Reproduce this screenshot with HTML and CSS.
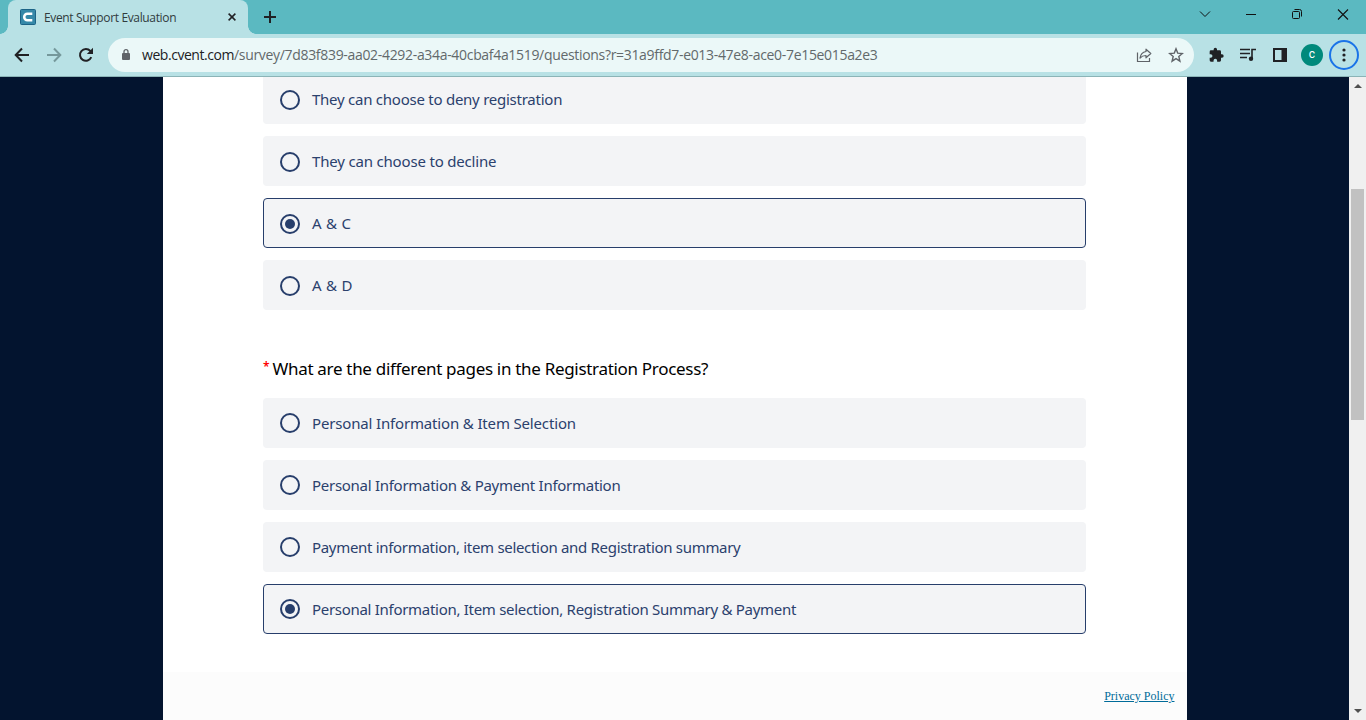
FILE: index.html
```html
<!DOCTYPE html>
<html lang="en">
<head>
<meta charset="utf-8">
<title>Event Support Evaluation</title>
<link rel="stylesheet" href="styles.css">
</head>
<body>
<div class="browser">
  <header class="tabstrip">
    <div class="tab">
      <svg class="favicon" width="16" height="16" viewBox="0 0 16 16"><rect x=".5" y=".5" width="15" height="15" rx="1" fill="#3588a8" stroke="#1c6386"/><path d="M12.300 4.800H7.400a3.200 3.200 0 0 0 0 6.400h4.900" fill="none" stroke="#fff" stroke-width="2.500"/></svg>
      <span class="tab-title">Event Support Evaluation</span>
      <svg class="tab-close" width="8" height="8" viewBox="0 0 8 8"><path d="M.6.6l6.800 6.800M7.400.6L.6 7.400" stroke="#202124" stroke-width="1.500"/></svg>
    </div>
    <svg class="new-tab" width="12" height="12" viewBox="0 0 12 12"><path d="M6 0v12M0 6h12" stroke="#202124" stroke-width="2"/></svg>
    <div class="window-controls">
      <svg width="46" height="30" viewBox="0 0 46 30"><path d="M18 11.500l5 5 5-5" fill="none" stroke="#111" stroke-width="1"/></svg>
      <svg width="46" height="30" viewBox="0 0 46 30"><path d="M18 14.500h10" stroke="#111"/></svg>
      <svg width="46" height="30" viewBox="0 0 46 30"><rect x="18.500" y="11.500" width="7" height="7" rx="1" fill="none" stroke="#111"/><path d="M20.500 9.500h5a2 2 0 0 1 2 2v5" fill="none" stroke="#111"/></svg>
      <svg width="46" height="30" viewBox="0 0 46 30"><path d="M18 9.500l10 10M28 9.500l-10 10" stroke="#111" stroke-width="1.100"/></svg>
    </div>
  </header>
  <nav class="toolbar">
    <div class="nav-buttons">
      <svg width="16" height="16" viewBox="0 0 16 16"><path d="M15 8H2M8 1.500L1.700 8 8 14.500" fill="none" stroke="#202124" stroke-width="2"/></svg>
      <svg width="16" height="16" viewBox="0 0 16 16"><path d="M1 8h13M8 1.500L14.300 8 8 14.500" fill="none" stroke="#75989b" stroke-width="2"/></svg>
      <svg width="16" height="16" viewBox="0 0 16 16"><path d="M13.300 10.200A5.900 5.900 0 1 1 12.300 3.900L14 5.600" fill="none" stroke="#202124" stroke-width="2"/><path d="M15 .8v6.200H8.800z" fill="#202124"/></svg>
    </div>
    <div class="address">
      <svg class="lock" width="8" height="12" viewBox="0 0 8 12"><path d="M1 4h6a1 1 0 0 1 1 1v5a1 1 0 0 1-1 1H1a1 1 0 0 1-1-1V5a1 1 0 0 1 1-1z" fill="#5f6368"/><path d="M2 4.500V2.700a2 2 0 0 1 4 0v1.800" fill="none" stroke="#5f6368" stroke-width="1.300"/></svg>
      <span class="url"><span class="host">web.cvent.com</span>/survey/7d83f839-aa02-4292-a34a-40cbaf4a1519/questions?r=31a9ffd7-e013-47e8-ace0-7e15e015a2e3</span>
      <svg class="share" width="16" height="16" viewBox="0 0 16 16"><path d="M1.500 5.500v9h12v-3.500" fill="none" stroke="#5f6368" stroke-width="1.200"/><path d="M10 2.200L14.800 6.500 10 10.800V8.500c-2.600 0-4.400.7-6 2.600.5-3.600 2.700-6.100 6-6.600z" fill="none" stroke="#5f6368" stroke-width="1.200" stroke-linejoin="round"/></svg>
      <svg class="star" width="16" height="16" viewBox="0 0 16 16"><path d="M8 1.800l1.700 4.300 4.700.4-3.600 3 1.100 4.600L8 11.600l-3.900 2.500 1.100-4.600-3.600-3 4.700-.4z" fill="none" stroke="#5f6368" stroke-width="1.400"/></svg>
    </div>
    <div class="actions">
      <svg width="16" height="16" viewBox="0 0 24 24"><path transform="translate(.5 0)" d="M20.500 11H19V7a2 2 0 0 0-2-2h-4V3.500a2.500 2.500 0 0 0-5 0V5H4a2 2 0 0 0-2 2v3.800h1.500a2.700 2.700 0 0 1 0 5.400H2V20a2 2 0 0 0 2 2h3.800v-1.500a2.700 2.700 0 0 1 5.400 0V22H17a2 2 0 0 0 2-2v-4h1.500a2.500 2.500 0 0 0 0-5z" fill="#202124"/></svg>
      <svg width="16" height="16" viewBox="0 0 16 16"><path d="M0 2.500h10M0 6.500h10M0 10.500h7M12 11V2.500h4" fill="none" stroke="#202124" stroke-width="1.600"/><circle cx="11" cy="11.800" r="2.200" fill="#202124"/></svg>
      <svg width="16" height="16" viewBox="0 0 16 16"><path d="M2 2h12v12H2z" fill="none" stroke="#202124" stroke-width="2"/><path d="M9.500 2H14v12H9.500z" fill="#202124"/></svg>
    </div>
    <span class="avatar">c</span>
    <span class="menu"><svg width="4" height="14" viewBox="0 0 4 14"><circle cx="2" cy="2" r="1.600"/><circle cx="2" cy="7" r="1.600"/><circle cx="2" cy="12" r="1.600"/></svg></span>
  </nav>
  <div class="viewport">
    <main class="page">
      <section class="questions">
        <div class="option upper first"><i class="radio"></i><span class="label l1">They can choose to deny registration</span></div>
        <div class="option upper"><i class="radio"></i><span class="label l2">They can choose to decline</span></div>
        <div class="option upper selected"><i class="radio"></i><span class="label l3">A &amp; C</span></div>
        <div class="option upper"><i class="radio"></i><span class="label l4">A &amp; D</span></div>
        <h2 class="question"><span class="required">*</span><span class="question-text">What are the different pages in the Registration Process?</span></h2>
        <div class="option"><i class="radio"></i><span class="label l5">Personal Information &amp; Item Selection</span></div>
        <div class="option"><i class="radio"></i><span class="label l6">Personal Information &amp; Payment Information</span></div>
        <div class="option"><i class="radio"></i><span class="label l7">Payment information, item selection and Registration summary</span></div>
        <div class="option selected"><i class="radio"></i><span class="label l8">Personal Information, Item selection, Registration Summary &amp; Payment</span></div>
      </section>
      <footer class="footer"><a class="privacy">Privacy Policy</a></footer>
    </main>
    <aside class="scrollbar">
      <svg width="8" height="4" viewBox="0 0 8 4"><path d="M4 0l4 4H0z"/></svg>
      <span class="thumb"></span>
      <svg class="down" width="8" height="4" viewBox="0 0 8 4"><path d="M0 0h8L4 4z"/></svg>
    </aside>
  </div>
</div>
</body>
</html>
```
FILE: styles.css
```css
* { box-sizing: border-box; }
body { margin: 0; overflow: hidden; }
svg { display: block; flex: none; }
.browser { width: 1366px; height: 720px; display: flex; flex-direction: column; }
.tabstrip { height: 34px; flex: none; background: #5bb9c1; display: flex; padding-left: 8px; }
.tab { width: 240px; height: 34px; background: #b8e1e5; border-radius: 8px 8px 0 0; display: flex; align-items: center; padding: 0 12px; position: relative; }
.tab::before, .tab::after { content: ""; position: absolute; bottom: 0; width: 8px; height: 8px; }
.tab::before { left: -8px; background: radial-gradient(circle at 0 0, transparent 7.5px, #b8e1e5 8px); }
.tab::after { right: -8px; background: radial-gradient(circle at 100% 0, transparent 7.5px, #b8e1e5 8px); }
.tab-title { margin-left: 8px; font: 12px "Open Sans", sans-serif; color: #303b3d; white-space: nowrap; letter-spacing: -.35px; }
.tab-close { margin-left: auto; }
.new-tab { margin: 11px 0 0 16px; }
.window-controls { margin-left: auto; display: flex; }
.toolbar { height: 43px; flex: none; background: #b8e1e5; border-bottom: 1px solid #8bb4b7; display: flex; align-items: center; padding: 0 7px 0 14px; }
.nav-buttons { display: flex; gap: 16px; }
.address { width: 1086px; height: 34px; margin-left: 14px; border-radius: 17px; background: #ebf8f8; display: flex; align-items: center; padding: 0 10px 0 14px; }
.url { margin-left: 12px; padding-bottom: 1px; font: 14px "Open Sans", sans-serif; color: #62696b; white-space: nowrap; letter-spacing: -.32px; }
.host { color: #202124; letter-spacing: -.45px; }
.share { margin-left: auto; }
.star { margin-left: 16px; }
.actions { display: flex; gap: 16px; margin-left: 14px; }
.avatar { width: 22px; height: 22px; border-radius: 50%; background: #00897b; color: #fff; margin-left: 13px; font: 12px/21px Roboto, sans-serif; text-align: center; }
.menu { width: 30px; height: 30px; border: 2px solid #1a73e8; border-radius: 50%; margin-left: 6px; display: flex; align-items: center; justify-content: center; fill: #202124; }
.viewport { flex: 1; min-height: 0; background: #03142f; display: flex; overflow: hidden; }
.page { width: 1024px; margin-left: 163px; background: #fff; display: flex; flex-direction: column; }
.questions { height: 595px; padding: 0 101px 0 100px; flex: none; }
.option { height: 50px; margin-bottom: 12px; border: 1px solid transparent; border-radius: 4px; background: #f3f4f6; display: flex; align-items: center; padding-left: 16px; }
.option.first { margin-top: -3px; }
.option.selected { border-color: #273e6b; }
.radio { width: 20px; height: 20px; border: 2px solid #273e6b; border-radius: 50%; flex: none; display: flex; align-items: center; justify-content: center; }
.upper .radio { margin-top: 2px; }
.selected .radio::after { content: ""; width: 10px; height: 10px; border-radius: 50%; background: #273e6b; }
.label { margin-left: 12px; font: 15px/24px "Noto Sans", sans-serif; color: #2b416d; white-space: nowrap; }
.l1 { letter-spacing: -.25px; }
.l2 { letter-spacing: -.18px; }
.l3, .l4 { letter-spacing: .3px; }
.l5 { letter-spacing: -.16px; }
.l6 { letter-spacing: -.28px; }
.l7 { letter-spacing: -.31px; }
.l8 { letter-spacing: -.295px; }
.question { height: 76px; margin: 0; padding-top: 35px; display: flex; font: 17px/24px "Noto Sans", sans-serif; color: #000; white-space: nowrap; }
.question-text { letter-spacing: -.31px; }
.required { width: 9.500px; color: #f00; font-size: 12px; line-height: 20px; font-weight: 600; }
.footer { flex: 1; background: #fcfcfc; padding: 16px 12.500px 0 0; text-align: right; font: 12px/16px "Liberation Serif", serif; }
.privacy { color: #006b99; text-decoration: underline; }
.scrollbar { width: 17px; margin-left: auto; background: #f0f0f0; display: flex; flex-direction: column; align-items: center; padding: 7px 0; fill: #505050; }
.thumb { width: 13px; height: 231px; margin-top: 101px; background: #c1c1c1; }
.down { margin-top: auto; }
```
